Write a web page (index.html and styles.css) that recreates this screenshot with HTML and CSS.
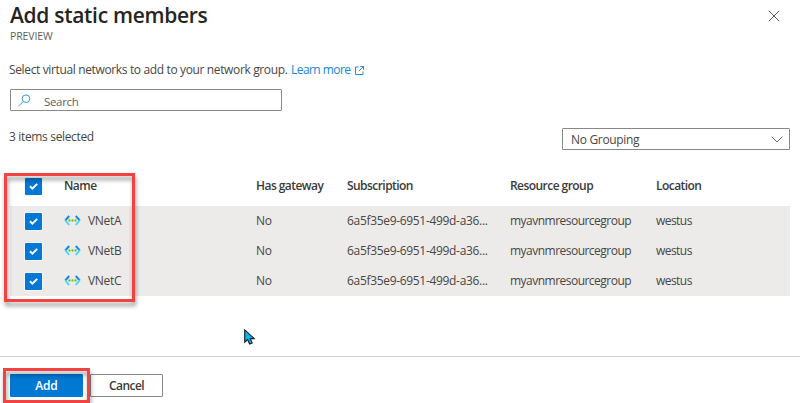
FILE: index.html
```html
<!DOCTYPE html>
<html lang="en">
<head>
<meta charset="utf-8">
<title>Add static members</title>
<link rel="stylesheet" href="styles.css">
</head>
<body>
<svg class="defs" aria-hidden="true">
  <symbol id="vnet" viewBox="0 0 17 11">
    <path d="M5.2 1 1.2 5.5" stroke="#1688dc" stroke-width="1.9" fill="none"/>
    <path d="M1.2 5.2 5.2 10" stroke="#42d8f8" stroke-width="1.9" fill="none"/>
    <path d="M11.8 1 15.8 5.5" stroke="#1688dc" stroke-width="1.9" fill="none"/>
    <path d="M15.8 5.2 11.8 10" stroke="#42d8f8" stroke-width="1.9" fill="none"/>
    <circle cx="5.5" cy="5.5" r="1.15" fill="#76bc2d"/><circle cx="8.5" cy="5.5" r="1.15" fill="#76bc2d"/><circle cx="11.5" cy="5.5" r="1.15" fill="#76bc2d"/>
  </symbol>
  <symbol id="check" viewBox="0 0 17 17">
    <path d="M5 8.2 7.4 10.6 12.2 5.9" stroke="#fff" stroke-width="2" fill="none"/>
  </symbol>
</svg>
<main class="panel">
  <header class="head">
    <div>
      <h1 class="title">Add static members</h1>
      <div class="preview">PREVIEW</div>
    </div>
    <svg class="close" viewBox="0 0 12 12"><path d="M.8.8 11.2 11.2M11.2.8.8 11.2" stroke="#555" fill="none"/></svg>
  </header>
  <p class="intro"><span class="intro-text">Select virtual networks to add to your network group.</span><a class="link">Learn more</a><svg class="external" viewBox="0 0 9 9"><path d="M3.5 1H.5V8.5H8V5.5M5.3.5H8.5V3.7M8.4.6 3.8 5.2" stroke="#2b88d8" fill="none"/></svg></p>
  <div class="search">
    <svg class="lens" viewBox="0 0 13 13"><circle cx="8" cy="4.7" r="3.8" stroke="#3a96dd" fill="none"/><path d="M5.2 7.5.5 12.2" stroke="#3a96dd" fill="none"/></svg>
    <span class="placeholder">Search</span>
  </div>
  <div class="tools">
    <span class="count">3 items selected</span>
    <div class="dropdown"><span class="grouping">No Grouping</span><svg class="chevron" viewBox="0 0 12 7"><path d="M.7.7 6 6 11.3.7" stroke="#666" fill="none"/></svg></div>
  </div>
  <section class="table">
    <div class="row header">
      <span class="box"><svg><use href="#check"/></svg></span><span>Name</span><span>Has gateway</span><span>Subscription</span><span>Resource group</span><span>Location</span>
    </div>
    <div class="row item">
      <span class="box"><svg><use href="#check"/></svg></span><span class="name"><svg class="vnet"><use href="#vnet"/></svg><span>VNetA</span></span><span>No</span><span>6a5f35e9-6951-499d-a36...</span><span class="group">myavnmresourcegroup</span><span class="loc">westus</span>
    </div>
    <div class="row item">
      <span class="box"><svg><use href="#check"/></svg></span><span class="name"><svg class="vnet"><use href="#vnet"/></svg><span>VNetB</span></span><span>No</span><span>6a5f35e9-6951-499d-a36...</span><span class="group">myavnmresourcegroup</span><span class="loc">westus</span>
    </div>
    <div class="row item">
      <span class="box"><svg><use href="#check"/></svg></span><span class="name"><svg class="vnet"><use href="#vnet"/></svg><span>VNetC</span></span><span>No</span><span>6a5f35e9-6951-499d-a36...</span><span class="group">myavnmresourcegroup</span><span class="loc">westus</span>
    </div>
  </section>
  <footer class="foot">
    <button class="btn primary">Add</button><button class="btn">Cancel</button>
  </footer>
  <div class="mark mark-rows"></div>
  <div class="mark mark-add"></div>
  <svg class="cursor" viewBox="0 0 12 17"><path d="M.7.9V13.2L3.6 10.5 5.6 15 8.2 13.9 6.2 9.6H10.2Z" fill="#00b7f0" stroke="#10202c" stroke-width="1.1"/></svg>
</main>
</body>
</html>
```
FILE: styles.css
```css
* { box-sizing: border-box; }
body { margin: 0; background: #fff; font-family: "Open Sans", "Noto Sans", sans-serif; font-size: 12px; letter-spacing: -.32px; color: #484644; }
.defs { position: absolute; width: 0; height: 0; }
.panel { position: relative; width: 800px; height: 403px; overflow: hidden; display: flex; flex-direction: column; white-space: nowrap; }
.panel > * { flex: none; }
.head { height: 61px; padding: 0 20px 0 10px; display: flex; justify-content: space-between; }
.title { margin: 0; font-size: 21px; font-weight: 600; line-height: 30px; letter-spacing: -.3px; color: #252423; }
.preview { font-size: 10.5px; line-height: 13px; color: #605e5c; letter-spacing: -.1px; }
.close { width: 12px; height: 12px; margin-top: 10px; }
.intro { margin: 0 0 0 9px; height: 18px; line-height: 18px; display: flex; }
.intro-text { width: 282px; letter-spacing: -.36px; }
.link { color: #1683d8; width: 64px; letter-spacing: -.55px; }
.external { width: 9px; height: 9px; margin-top: 5px; }
.search { margin: 10px 0 0 10px; width: 272px; height: 22px; border: 1px solid #8a8886; border-radius: 1px; display: flex; align-items: center; padding-left: 7px; }
.lens { width: 13px; height: 13px; margin-right: 13px; }
.placeholder { font-size: 11.5px; color: #605e5c; padding-top: 2px; }
.tools { height: 40px; margin: 17px 10px 0 9px; display: flex; justify-content: space-between; }
.count { line-height: 18px; letter-spacing: -.34px; }
.dropdown { width: 228px; height: 22px; border: 1px solid #8a8886; border-radius: 1px; display: flex; align-items: center; justify-content: space-between; padding: 0 6px 0 8px; }
.chevron { width: 12px; height: 7px; }
.table { margin: 0 10px; }
.row { display: grid; grid-template-columns: 39px 192px 91px 163px 146px 119px; padding-left: 15px; height: 30px; align-items: center; }
.header { height: 38px; padding-bottom: 4px; font-weight: 600; letter-spacing: -.55px; color: #3b3a39; }
.box { width: 17px; height: 17px; margin-top: 2px; background: #0078d4; border-radius: 1px; box-shadow: 0 0 0 1px #f3f8fc; }
.box svg { width: 17px; height: 17px; display: block; }
.item { background: #edebe9; padding-bottom: 1px; }
.name { display: flex; align-items: center; gap: 7px; }
.vnet { width: 17px; height: 11px; }
.group { letter-spacing: -.52px; }
.loc { letter-spacing: -.55px; }
.foot { margin-top: 60px; border-top: 1px solid #d2d0ce; padding: 17px 0 0 10px; display: flex; gap: 7px; height: 47px; }
.btn { width: 73px; height: 23px; padding: 0; font: 600 12px/20px "Open Sans", sans-serif; letter-spacing: -.55px; color: #3b3a39; background: #fff; border: 1px solid #8a8886; border-radius: 1px; }
.primary { background: #0078d4; border-color: #0078d4; color: #fff; letter-spacing: -.2px; }
.mark { position: absolute; border: 3px solid #f34242; filter: drop-shadow(1px 4px 2px rgba(0,0,0,.4)); }
.mark-rows { left: 4px; top: 173px; width: 131px; height: 129px; }
.mark-add { left: 3px; top: 368px; width: 87px; height: 35px; }
.cursor { position: absolute; left: 244px; top: 329px; width: 12px; height: 17px; }
```
